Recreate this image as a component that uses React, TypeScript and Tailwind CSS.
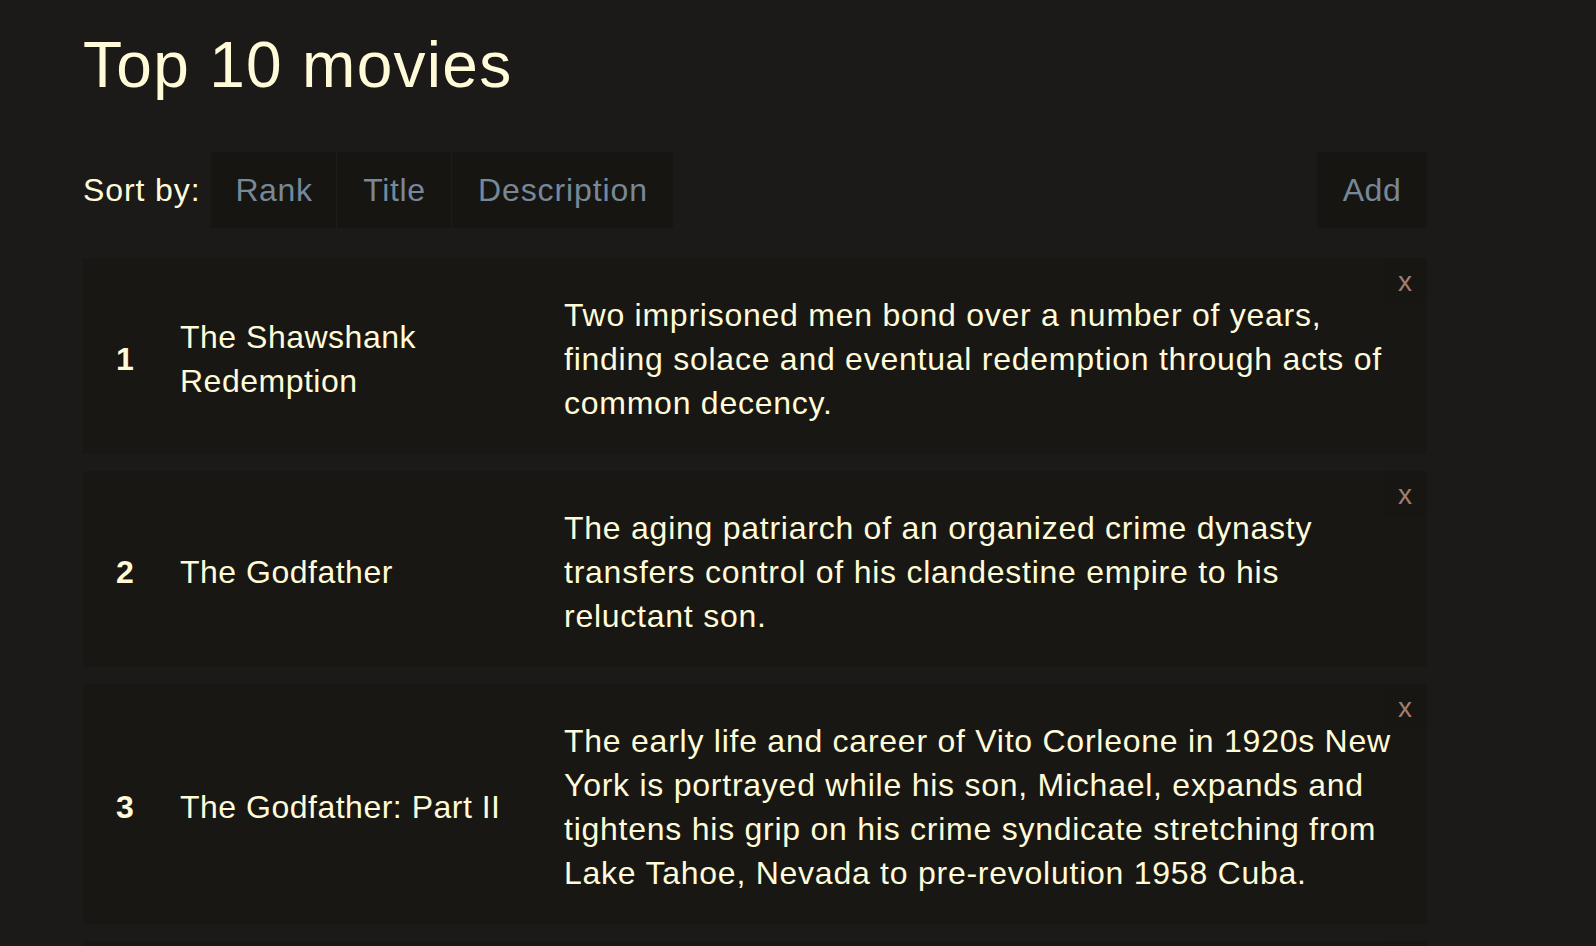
import React, { useState } from "react";

type Movie = {
  rank: number;
  title: string;
  description: string;
};

const initialMovies: Movie[] = [
  {
    rank: 1,
    title: "The Shawshank Redemption",
    description:
      "Two imprisoned men bond over a number of years, finding solace and eventual redemption through acts of common decency.",
  },
  {
    rank: 2,
    title: "The Godfather",
    description:
      "The aging patriarch of an organized crime dynasty transfers control of his clandestine empire to his reluctant son.",
  },
  {
    rank: 3,
    title: "The Godfather: Part II",
    description:
      "The early life and career of Vito Corleone in 1920s New York is portrayed while his son, Michael, expands and tightens his grip on his crime syndicate stretching from Lake Tahoe, Nevada to pre-revolution 1958 Cuba.",
  },
  {
    rank: 4,
    title: "The Dark Knight",
    description:
      "When the menace known as the Joker wreaks havoc and chaos on the people of Gotham, Batman must accept one of the greatest psychological and physical tests of his ability to fight injustice.",
  },
];

export default function App() {
  const [movies, setMovies] = useState<Movie[]>(initialMovies);

  // sort by one of the columns, rank is numeric the rest are strings
  const sortBy = (key: keyof Movie) => {
    const sorted = [...movies].sort((a, b) =>
      key === "rank" ? a.rank - b.rank : String(a[key]).localeCompare(String(b[key]))
    );
    setMovies(sorted);
  };

  const removeMovie = (rank: number) => {
    setMovies(movies.filter((m) => m.rank !== rank));
  };

  return (
    <div className="h-screen overflow-hidden bg-[#1b1a18] text-[#fffbd9] font-['Liberation_Sans',Arial,sans-serif] pl-[83px] pt-[27px]">
      <div className="w-[1344px]">
        <h1 className="text-[64px] leading-[76px] tracking-[1.3px]">Top 10 movies</h1>

        <div className="flex items-center mt-[49px] text-[32px]">
          <span className="mr-[11px] tracking-[0.9px]">Sort by:</span>
          <button
            className="h-[76px] w-[126px] bg-[#161511] text-[#778899] tracking-[0.6px] border-r border-[#1d1c19]"
            onClick={() => sortBy("rank")}
          >
            Rank
          </button>
          <button
            className="h-[76px] w-[115px] bg-[#161511] text-[#778899] tracking-[0.6px] border-r border-[#1d1c19]"
            onClick={() => sortBy("title")}
          >
            Title
          </button>
          <button
            className="h-[76px] w-[221px] bg-[#161511] text-[#778899] tracking-[0.9px]"
            onClick={() => sortBy("description")}
          >
            Description
          </button>
          <button className="ml-auto h-[76px] w-[110px] bg-[#161511] text-[#778899] tracking-[0.6px]">Add</button>
        </div>

        <div className="flex flex-col gap-[17px] mt-[30px]">
          {movies.map((movie) => (
            <div
              key={movie.rank}
              className="relative flex items-center bg-[#181713] pt-[35px] pb-[29px] pl-[33px] text-[32px] leading-[44px]"
            >
              <div className="w-[64px] shrink-0 font-bold">{movie.rank}</div>
              <div className="w-[384px] shrink-0 pr-[40px] tracking-[0.5px]">{movie.title}</div>
              <div className="w-[832px] shrink-0 tracking-[0.75px]">{movie.description}</div>
              <button
                className="absolute top-0 right-0 w-[44px] h-[45px] bg-[#171612] text-[#a37d6d] text-[28px] leading-[48px]"
                onClick={() => removeMovie(movie.rank)}
              >
                x
              </button>
            </div>
          ))}
        </div>
      </div>
    </div>
  );
}
